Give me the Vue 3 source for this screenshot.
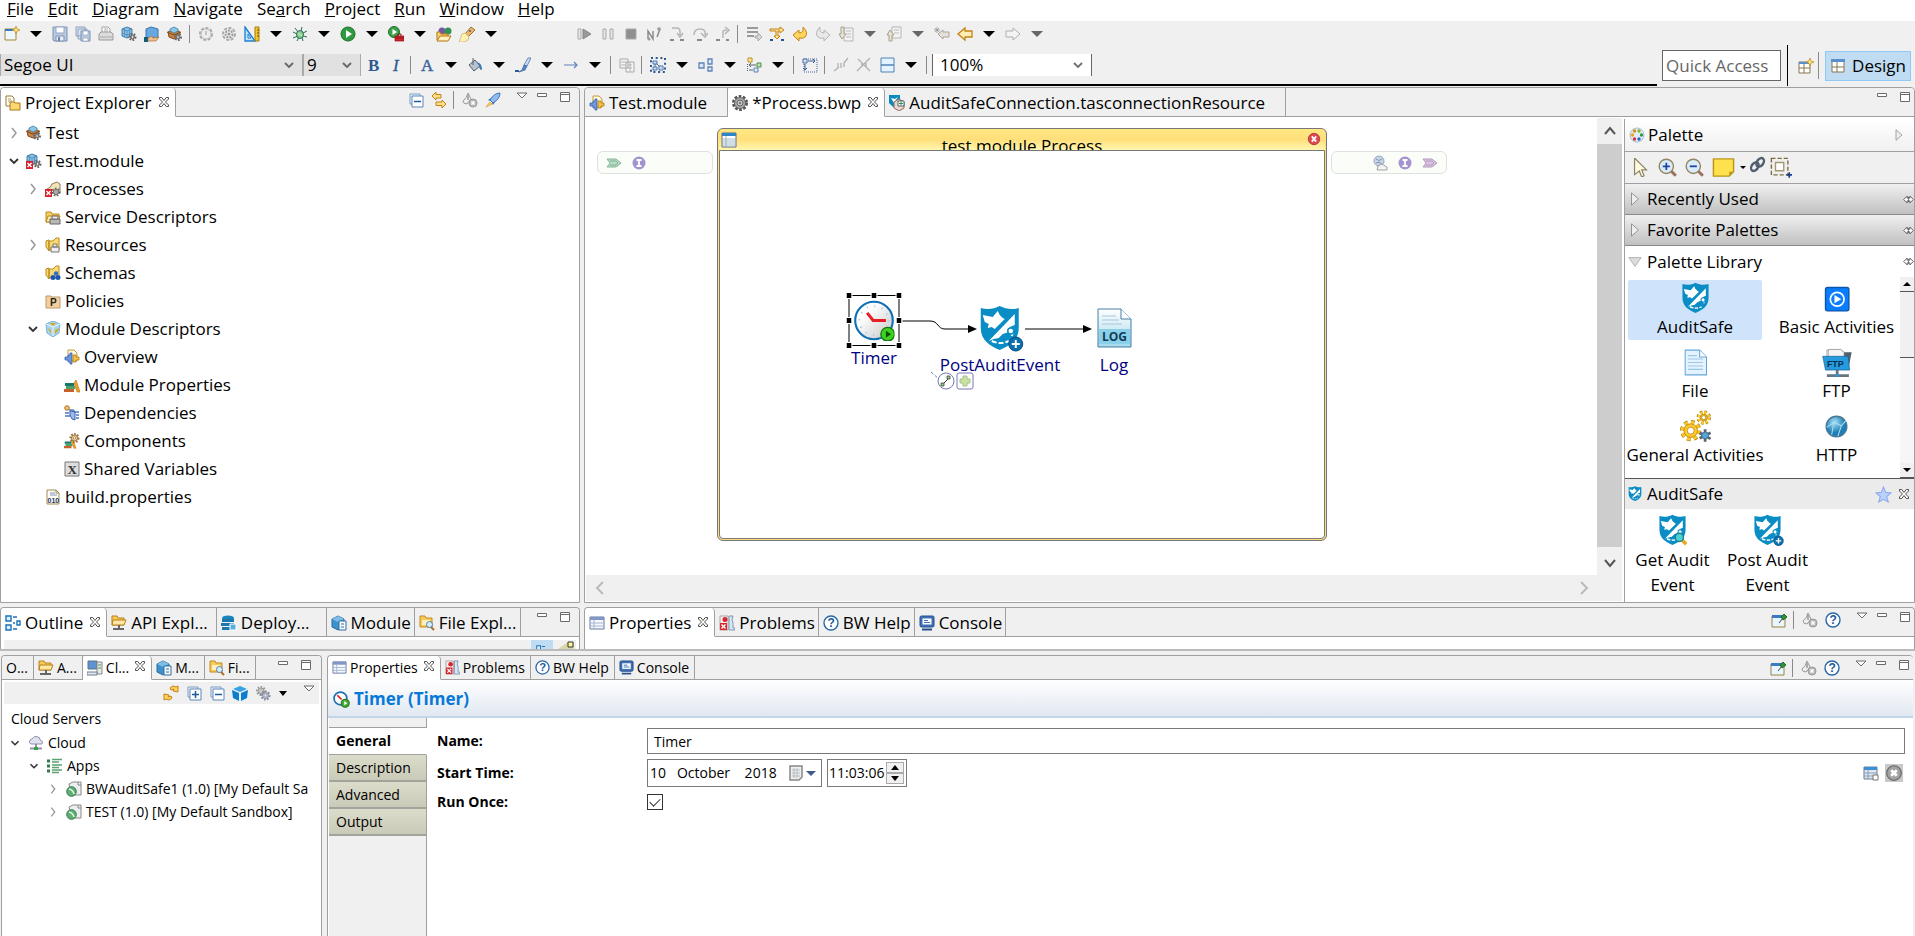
<script setup>
import { h, ref } from 'vue'

const gear = (x, y, r, fill, stroke) =>
    `<circle cx="${x}" cy="${y}" r="${r}" fill="none" stroke="${stroke}" stroke-width="2" stroke-dasharray="1.6 1.4"/><circle cx="${x}" cy="${y}" r="${r - 1}" fill="${fill}" stroke="${stroke}"/><circle cx="${x}" cy="${y}" r="1.2" fill="#fff" stroke="${stroke}" stroke-width=".7"/>`
const cube = '<path d="M1 3l5-2 5 2v7l-5 2-5-2z" fill="#8cc0e6" stroke="#3f7fae"/><path d="M1 3l5 2 5-2M6 5v7M3.500 2v9M8.500 2v9M1 7l5 2 5-2" fill="none" stroke="#4c8ab8" stroke-width=".8"/>'
const errorBadge = '<path d="M0 8h7v8H0z" fill="#d8202c"/><path d="M1.500 10l4 4m0-4l-4 4" stroke="#fff" stroke-width="1.400"/>'
const folder = '<path d="M1 13V3h5l1 2h7v8z" fill="#f6cf62" stroke="#b98a1d"/><path d="M3 7h12l-2 6H1z" fill="#fde9a6" stroke="#b98a1d"/>'
const stack = '<path d="M1 6h9v3H1z" fill="#17766e"/><path d="M2 9h9v3H2z" fill="#4aa36b"/><path d="M0 12h10v3H0z" fill="#c7602a"/><path d="M12 3l4 12h-3l-3-9z" fill="#f0a020" stroke="#b96d0b" stroke-width=".6"/>'
const shield = '<path d="M5 3c7 2 13 1 19-2 6 3 12 4 19 2v20c0 12-9 18-19 22C14 41 5 35 5 23z" fill="#0a8dc5"/><path d="M7 10l10 2 5-6 2 4 3 3 2 1-10 10-3-2-4 1 1-4-4-2z" fill="#fff"/><path d="M39 9L13 36l5-2 5-1 4-4 6-2 1-5 5-2z" fill="#fff"/><path d="M16 36q9 4 17 0m3-5l2-7" fill="none" stroke="#fff" stroke-width="2" stroke-dasharray="5 2"/><circle cx="35" cy="26" r="3" fill="#fff" stroke="#0a8dc5" stroke-width="1.500"/>'
const doc = '<path d="M2 1h9l3 3v11H2z" fill="#fffdf5" stroke="#a18b55"/><path d="M11 1v3h3" fill="none" stroke="#a18b55"/>'
const puzzle = '<path d="M4 1h6l3 3v8H4z" fill="#fff8df" stroke="#c29a3a"/><path d="M1 8h3V6h2V4h2v11H6v-2H4v-2H1z" fill="#6d96dc" stroke="#3a62ad" stroke-width=".8"/><path d="M9 6h3v2h3v3h-3v2H9z" fill="#f3c048" stroke="#b27b12" stroke-width=".8"/>'
const windowIcon = '<path d="M1 2h14v12H1z" fill="#f4f8fd" stroke="#66789e"/><path d="M1 2h14v3H1z" fill="#8197c5"/><path d="M5 5v9M1 8h14M1 11h14" stroke="#a9b4cf"/>'

const icons = {
    new: '<path d="M1 3h11v11H1z" fill="#eef7ff" stroke="#a88735"/><path d="M1 3h9v2H1z" fill="#3f78bd"/><path d="M12 0l1.200 3L16 4l-2.800 1L12 8l-1.200-3L8 4l2.800-1z" fill="#ffe27a" stroke="#b88a1e" stroke-width=".7"/>',
    save: '<path d="M1 1h14v14H2l-1-1z" fill="#b9c9df" stroke="#7d92b3"/><path d="M4 1h8v6H4z" fill="#fff" stroke="#93a6c4"/><path d="M4 10h8v5H4z" fill="#e9eef6" stroke="#7d92b3"/><path d="M6 11h2v4H6z" fill="#6c82a6"/>',
    saveAll: '<path d="M1 1h9v9H1zM3 3h9v10H3z" fill="#dbe4f0" stroke="#8ea1be"/><path d="M6 5h9v10H6z" fill="#b9c9df" stroke="#7d92b3"/><path d="M8 5h5v4H8zM8 12h5v3H8z" fill="#fff" stroke="#93a6c4" stroke-width=".7"/>',
    print: '<path d="M4 7V1h6l2 2v4" fill="#fff" stroke="#a2a2a2"/><path d="M1 8l2-2h10l2 2v6H1z" fill="#dcdcdc" stroke="#999"/><path d="M2 11h12M6 3h4M6 5h4" stroke="#aaa"/>',
    module: cube + gear(11.5, 11, 3, '#bbb', '#666'),
    deploy: '<path d="M2 3l5-2 7 2v9H2z" fill="#66a8df" stroke="#3b77ab"/><path d="M0 11h4v5H0z" fill="#0b5c7d"/><path d="M4 12l4-2 1 2 6-1-3 4H4z" fill="#f1bf8e" stroke="#a96c3c" stroke-width=".7"/>',
    app: '<path d="M1 6l6-3 6 3-1 5-5 2-5-2z" fill="#c98341" stroke="#7c4a1c"/><path d="M3 3l4-2 4 2v2L7 7 3 5z" fill="#8cc9e8" stroke="#3e7e9f" stroke-width=".8"/><path d="M0 6l7 3 7-3" fill="none" stroke="#7c4a1c"/>' + gear(11, 11, 3, '#bbb', '#666'),
    gearOff: '<circle cx="8" cy="8" r="6" fill="none" stroke="#aaa" stroke-width="2" stroke-dasharray="3 1.500"/><circle cx="8" cy="8" r="5" fill="#eee" stroke="#bbb"/><path d="M8 5v4" stroke="#999"/>',
    gearsOff: '<circle cx="8" cy="8" r="6" fill="none" stroke="#aaa" stroke-width="2" stroke-dasharray="3 1.500"/><circle cx="8" cy="8" r="3.500" fill="#eee" stroke="#999" stroke-width="2" stroke-dasharray="2 1"/><circle cx="8" cy="8" r="1.500" fill="#999"/>',
    ruler: '<path d="M1 1l10 14H1z" fill="#bfe4ff" stroke="#1b7fd2" stroke-width="1.300"/><path d="M4 8l3 4H4z" fill="#fff" stroke="#1b7fd2"/><path d="M11 1h4v14h-4z" fill="#f6c52a" stroke="#a47c07"/><path d="M13 4h2m-2 3h2m-2 3h2" stroke="#6b5000"/>',
    bug: '<path d="M3 2l3 4M10 1L9 5M15 5l-4 2M1 6l4 2M1 12l5-2M5 15l2-4M15 11l-4-1M11 15l-1-4" stroke="#2c6b5a" fill="none"/><ellipse cx="8" cy="8.500" rx="3.500" ry="4" fill="#8ccf8a" stroke="#216b5e"/><path d="M6 7l4 3" stroke="#d8f5d0"/>',
    run: '<circle cx="8" cy="8" r="7" fill="#2f9a40" stroke="#1b6d2a"/><path d="M6 4l6 4-6 4z" fill="#fff"/>',
    runExternal: '<circle cx="6" cy="6" r="5.500" fill="#3ea04c" stroke="#1b6d2a"/><path d="M4.500 3l4.500 3-4.500 3z" fill="#fff"/><path d="M7 10h9v5H7z" fill="#d3232b" stroke="#8e1218" stroke-width=".7"/><path d="M10 10V8h3v2M7 12h9" fill="none" stroke="#8e1218"/>',
    openType: '<circle cx="6" cy="5" r="3.500" fill="#7658a8"/><circle cx="12" cy="5" r="3.500" fill="#2f9450"/><path d="M1 14V6h3l1 2h7v2" fill="#f7d073" stroke="#b27715"/><path d="M1 15l3-5h11l-3 5z" fill="#fff0bd" stroke="#b27715"/>',
    flashlight: '<path d="M6 8l6-7 4 3-7 7z" fill="#efb765" stroke="#9c6e34"/><path d="M3 8l3-1 4 4-1 3-4 2H0z" fill="#fff2b5" stroke="#c9a869" stroke-width=".7"/><circle cx="11" cy="5" r="1" fill="#465f93"/>',
    resume: '<path d="M1 3h3v10H1z" fill="#e5e5e5" stroke="#aaa"/><path d="M6 3l8 5-8 5z" fill="#999" stroke="#888"/>',
    pause: '<path d="M3 3h3v10H3zM10 3h3v10h-3z" fill="#e5e5e5" stroke="#aaa"/>',
    stop: '<path d="M3 3h10v10H3z" fill="#8f8f8f" stroke="#aaa"/>',
    disconnect: '<path d="M2 13V5l5 8V5m7-2l-3 8" fill="none" stroke="#8c8c8c" stroke-width="1.500"/><circle cx="13" cy="3" r="1.800" fill="#999"/><circle cx="3" cy="13" r="1.500" fill="#999"/>',
    stepInto: '<path d="M3 2h5q3 0 3 4v3m-3-2l3 4 3-4" fill="none" stroke="#b5b5b5" stroke-width="1.500"/><path d="M1 14h4m6 0h4" stroke="#888" stroke-width="2"/>',
    stepOver: '<path d="M2 9q0-6 6-6t5 6m-4-2l4 4 3-4" fill="none" stroke="#b5b5b5" stroke-width="1.500"/><path d="M5 14h5" stroke="#888" stroke-width="2"/>',
    stepReturn: '<path d="M8 12V6q0-2 4-2m-2-3l4 3-4 4" fill="none" stroke="#b5b5b5" stroke-width="1.500"/><path d="M1 14h4m6 0h3" stroke="#888" stroke-width="2"/>',
    dropFrame: '<path d="M1 2h11M1 6h11M1 10h7" stroke="#999" stroke-width="2"/><path d="M9 10h3V7l4 4-4 4v-3H9z" fill="#ddd" stroke="#999" stroke-width=".8"/>',
    stepFilter: '<path d="M1 3h10V1l4 3-4 3V5H9v5h2l-3 3-3-3h2V5H1z" fill="#ffe6a0" stroke="#c58212"/><path d="M1 14h3m8 0h3" stroke="#24548f" stroke-width="2"/>',
    undo: '<path d="M1 9l6-5v3q5 0 4-6 6 6 2 10-2 2-6 1v3z" fill="#ffd560" stroke="#c58212"/>',
    redo: '<path d="M15 9L9 4v3Q4 7 5 1q-6 6-2 10 2 2 6 1v3z" fill="#e8e8e8" stroke="#b5b5b5"/>',
    next: '<path d="M6 2h9v13H6z" fill="#f3f3f3" stroke="#b5b5b5"/><path d="M8 5h5M8 8h5M8 11h5" stroke="#bbb"/><path d="M3 1h3v7h2l-4 5-3-5h2z" fill="#e6e3d8" stroke="#aaa08a"/>',
    previous: '<path d="M6 1h9v11H6z" fill="#f3f3f3" stroke="#b5b5b5"/><path d="M8 4h5M8 7h5" stroke="#bbb"/><path d="M3 15h3V9h2L4 4 1 9h2z" fill="#e6e3d8" stroke="#aaa08a"/>',
    lastEdit: '<path d="M4 8l5-4v2h6v5H9v2z" fill="#e4e1d8" stroke="#aaa59a"/><path d="M1 2l4 4m0-4L1 6m2-5v6M0 4h6" stroke="#999" stroke-width=".8"/>',
    back: '<path d="M1 8l7-6v3h7v6H8v3z" fill="#ffedb5" stroke="#c58212" stroke-width="1.300"/>',
    forward: '<path d="M15 8L8 2v3H1v6h7v3z" fill="#f4f4f4" stroke="#b0b0b0"/>',
    bold: '<text x="3" y="14" font-family="Liberation Serif" font-weight="bold" font-size="17" fill="#2f5a93">B</text>',
    italic: '<text x="5" y="14" font-family="Liberation Serif" font-style="italic" font-size="17" fill="#2f5a93" stroke="#2f5a93" stroke-width=".3">I</text>',
    fontColor: '<text x="2" y="14" font-family="Liberation Serif" font-size="17" fill="#3f67a0" stroke="#3f67a0" stroke-width=".5">A</text>',
    fill: '<path d="M2 8l6-5 5 6-6 5z" fill="#b9c3cd" stroke="#57606a"/><path d="M6 1v7" stroke="#57606a"/><path d="M10 5q5 1 5 8-3 0-3-5z" fill="#3a76b8"/>',
    brush: '<path d="M13 1h3l-4 8-3-1z" fill="#cfe0f5" stroke="#456ea5" stroke-width=".8"/><path d="M9 8l3 1-2 4-6 2 3-2z" fill="#4f83c6" stroke="#456ea5" stroke-width=".8"/><path d="M0 14h4" stroke="#2f5a93" stroke-width="2"/>',
    line: '<path d="M1 8h13m-3-3l3 3-3 3" fill="none" stroke="#5f81bd" stroke-width="1.200"/>',
    copyStyle: '<path d="M1 2h8v9H1zM7 5h8v10H7z" fill="#f4f4f4" stroke="#a9a9a9"/><path d="M2 5h5M2 8h5M9 8h4M9 11h4M11 5v10" stroke="#b5b5b5"/>',
    selectAll: '<path d="M1 1h14v14H1z" fill="none" stroke="#2d5890" stroke-dasharray="2 2.700" stroke-width="2"/><path d="M5 5l6 6M5 5v7" stroke="#43658f"/><path d="M3 4h4v3H3zM3 10h4v3H3zM9 9h4v4H9z" fill="#cfe0f5" stroke="#4b74a8"/>',
    arrange: '<path d="M1 6h5v5H1zM10 2h4v5h-4zM10 10h4v4h-4z" fill="#dbe8f8" stroke="#5f83b6" stroke-width="1.300"/>',
    align: '<path d="M2 1h4v4H2z" fill="#ffe9a5" stroke="#bb8c1f"/><path d="M11 6h4v4h-4z" fill="#bfe2b7" stroke="#4a8d45"/><path d="M8 11h4v4H8z" fill="#dbe8f8" stroke="#5f83b6"/><path d="M1.500 7v8" stroke="#567" stroke-dasharray="1 1"/><path d="M3 8h7m-7 0l2-2m-2 2l2 2M3 13h4" fill="none" stroke="#567"/>',
    autosize: '<path d="M2 2h13v13H2z" fill="none" stroke="#4568a0" stroke-dasharray="1 1"/><path d="M1 2h4v4H1z" fill="#d6e5f6" stroke="#4568a0"/><path d="M6 4h7m-2-2l2 2-2 2M3 7v6m-2-2l2 2 2-2" fill="none" stroke="#365f99"/>',
    hideA: '<path d="M1 14l5-4m5-4l4-5M5 6v5m3-5v5m3-5v4" fill="none" stroke="#b0b0b0" stroke-width="1.300"/>',
    hideB: '<path d="M1 14L14 1M2 2l12 12M6 6v4m4-4v4" fill="none" stroke="#b0b0b0" stroke-width="1.300"/>',
    split: '<path d="M2 1h13v14H2z" fill="#e4f3ff" stroke="#5383b4"/><path d="M2 8h13" stroke="#5383b4" stroke-width="1.500"/>',
    perspectiveNew: '<path d="M1 4h11v11H1z" fill="#fff" stroke="#857650"/><path d="M1 4h10v2H1z" fill="#5c8fd0"/><path d="M6 6v9M1 10h11" stroke="#857650"/><path d="M12 0l1.200 3L16 4l-2.800 1L12 8l-1.200-3L8 4l2.800-1z" fill="#ffe27a" stroke="#b88a1e" stroke-width=".7"/>',
    perspective: '<path d="M2 2h12v12H2z" fill="#fff" stroke="#857650"/><path d="M1 1h14v3H1z" fill="#5c8fd0"/><path d="M7 4v10M2 9h12" stroke="#857650"/>',
    explorer: '<path d="M1 1h6l2 2v8H1z" fill="#fff" stroke="#9a7b2d"/><path d="M3 4h3M3 6h4" stroke="#b99b5a"/><path d="M5 15V7h4l1 1h5v7z" fill="#fbd671" stroke="#a97b18"/>',
    close: '<path d="M2 2h3l3 4 3-4h3v2l-4 4 4 4v2h-3L8 10l-3 4H2v-2l4-4-4-4z" fill="#fff" stroke="#4a4a4a" stroke-width="1.300"/>',
    collapse: '<path d="M2 2h10v10H2z" fill="#e7f1fb" stroke="#7f9fc4"/><path d="M4 4h11v11H4z" fill="#fff" stroke="#5d86b8"/><path d="M6 9.500h7" stroke="#1b5c9a" stroke-width="1.500"/>',
    expand: '<path d="M2 2h10v10H2z" fill="#e7f1fb" stroke="#7f9fc4"/><path d="M4 4h11v11H4z" fill="#fff" stroke="#5d86b8"/><path d="M6 9.500h7M9.500 6v7" stroke="#1b5c9a" stroke-width="1.500"/>',
    link: '<path d="M5 0L1 4l4 4V6h5V2.500H5zM11 8l4 4-4 4v-2.500H5V10h6z" fill="#ffe08a" stroke="#c58212"/>',
    validate: '<path d="M6 1q-1 5-5 8 0 3 4 3l4-5z" fill="#eee" stroke="#999"/><path d="M6 3v5" stroke="#999" stroke-width="1.500"/><circle cx="11" cy="11" r="4" fill="#bbb" stroke="#999"/><path d="M9.500 9.500l3 3m0-3l-3 3" stroke="#fff" stroke-width="1.500"/>',
    rocket: '<path d="M15 1q-6 0-10 7l3 3q7-4 7-10z" fill="#8fbcf0" stroke="#4675b5"/><path d="M6 6L3 8l2 1zM10 10l-2 3-1-2z" fill="#3f72b8"/><path d="M5 10l-4 5 6-3z" fill="#ffd35c" stroke="#d58a1c" stroke-width=".6"/>',
    viewMenu: '<path d="M3 4h10l-5 5z" fill="#fff" stroke="#6b6b6b"/>',
    minimize: '<path d="M3.500 4.500h9v3h-9z" fill="#fff" stroke="#6b6b6b"/>',
    maximize: '<path d="M3.500 3.500h9v9h-9zM3.500 5.500h9" fill="#fff" stroke="#6b6b6b"/>',
    right: '<path d="M6 3l4 5-4 5" fill="none" stroke="#999" stroke-width="1.500"/>',
    down: '<path d="M4 6l4 4 4-4" fill="none" stroke="#333" stroke-width="1.800"/>',
    moduleError: cube + gear(11.5, 11, 3, '#bbb', '#666') + errorBadge,
    processes: '<path d="M2 8q4-1 5-5l5-2 3 2v9H2z" fill="#f3e3b7" stroke="#8a7a55"/>' + gear(11, 11, 3.5, '#ccc', '#666') + errorBadge,
    service: folder + '<path d="M5 10h10v5H5z" fill="#b9b9b9" stroke="#666"/><path d="M7 7h6v3H7z" fill="#eee" stroke="#666"/>',
    resources: '<path d="M1 4l3-1v11l-3-4zM4 4h4l3-3h3v12H4z" fill="#fbd872" stroke="#b98a1d"/><path d="M6 10h8v5H6zM8 7h4v3H8z" fill="#eee" stroke="#777"/>',
    schemas: '<path d="M1 4l3-1v11l-3-4zM4 4h4l3-3h3v12H4z" fill="#fbd872" stroke="#b98a1d"/><circle cx="11" cy="8.500" r="2.200" fill="#2f6ecc"/><circle cx="8" cy="12.500" r="2.500" fill="#1c56b5"/><circle cx="13" cy="12.500" r="2.500" fill="#1c56b5"/>',
    policies: '<path d="M1 3h5l1 1h8v11H1z" fill="#f3cf9d" stroke="#bd9a6c"/><text x="5" y="13" font-family="Liberation Sans" font-weight="bold" font-size="10" fill="#222">P</text>',
    descriptors: '<path d="M1 3l7-3 7 3-1 9-6 4-6-4z" fill="#a9d5ef" stroke="#7ab0d4"/><path d="M1 3l7 3 7-3M8 6v9" fill="none" stroke="#e6f5fd"/><path d="M5 2h6L8 5zM3 7l3 2v4zM10 13V9l4-2-1 3z" fill="#d9a91c"/>',
    overview: puzzle,
    properties: stack,
    dependencies: '<circle cx="3" cy="3" r="2.300" fill="#f3bd76" stroke="#b0762a"/><path d="M1 8h4M1 11h5M5 5h4l2 2h4M12 10h3M12 13h3" stroke="#4d78be" stroke-width="1.500" fill="none"/><path d="M6 6l5 1v8l-3-1-2-4z" fill="#9cb9ec" stroke="#3a62ad"/>',
    components: '<g transform="translate(0 4) scale(.75)">' + stack + '</g>' + gear(10.5, 5, 4, '#f1d9a0', '#9a6f3a'),
    variables: '<path d="M1 1h14v14H1z" fill="#ddd" stroke="#777"/><text x="3.500" y="13" font-family="Liberation Serif" font-weight="bold" font-size="13" fill="#333">X</text>',
    build: doc + '<path d="M5 4h5M5 6h7" stroke="#7c93b8"/><text x="2.500" y="14" font-family="Liberation Sans" font-weight="bold" font-size="7" fill="#1d3766">010</text>',
    gear: '<circle cx="8" cy="8" r="6.500" fill="none" stroke="#555" stroke-width="3" stroke-dasharray="2.600 1.480"/><circle cx="8" cy="8" r="5.500" fill="#aaa" stroke="#666"/><circle cx="8" cy="8" r="3" fill="#ccc" stroke="#666"/><circle cx="8" cy="8" r="1.200" fill="#777"/>',
    connection: '<path d="M0 0h11v11q-4 3-8 0L0 8z" fill="#0b8bbd"/><path d="M2 3l4 1 3-2-4 6z" fill="#fff"/><path d="M5 7l5-3 5 3v6l-5 3-5-3z" fill="#ead6cc" stroke="#8a6d60"/><path d="M9 6h6v5H9z" fill="#fff" stroke="#345" stroke-width=".8"/><path d="M10 8.500h4m-2-2v4" stroke="#1a9a44"/>',
    table: '<path d="M1 1h14v14H1z" fill="#fff" stroke="#5d6f83"/><path d="M1 1h14v3H1z" fill="#2e86c8"/><path d="M5 4v11M1 7h14M1 9h14M1 11h14M1 13h14" stroke="#8ea8bd" stroke-width=".8"/>',
    failed: '<circle cx="8" cy="8" r="6.500" fill="#dc4a50" stroke="#b2353c"/><path d="M5.500 5l5 6m0-6l-5 6" stroke="#fff" stroke-width="2"/>',
    inputPort: '<path d="M1 4h9l5 4-5 4H1l3-4z" fill="#b7ddc5" stroke="#87b597"/><path d="M4 6h6l2 2-2 2H4" fill="none" stroke="#73a786" stroke-width=".8"/>',
    outputPort: '<path d="M1 4h9l5 4-5 4H1l3-4z" fill="#d9c5e0" stroke="#b49bbd"/><path d="M4 6h6l2 2-2 2H4" fill="none" stroke="#ac90b7" stroke-width=".8"/>',
    interface: '<circle cx="8" cy="8" r="6.500" fill="#a394cf"/><path d="M5.500 5h5M8 5v6M5.500 11h5" stroke="#fff" stroke-width="1.800"/>',
    fault: '<circle cx="7" cy="6" r="5" fill="#c9d5e6" stroke="#97a8c1"/><path d="M4 4q3 3 6 0M4 8q3-2 6 1" fill="none" stroke="#8095b6"/><path d="M5 15l1-4 4-2 5 3v3z" fill="#f2f2f2" stroke="#a3a3a3"/>',
    palette: '<circle cx="8" cy="8" r="7" fill="#e3ecf7" stroke="#a9bbd3"/><circle cx="5.500" cy="4" r="1.700" fill="#d7901c"/><circle cx="10" cy="4" r="1.700" fill="#7cb82a"/><circle cx="3.500" cy="8" r="1.700" fill="#e9a911"/><circle cx="12.500" cy="8" r="1.700" fill="#2b9c3d"/><circle cx="5.500" cy="12" r="1.700" fill="#d3303a"/><circle cx="10" cy="12" r="1.700" fill="#2e64c4"/>',
    cursor: '<path d="M3 0l10 10H9l2 5-2 1-2-5-4 3z" fill="#fffbe0" stroke="#8b8262"/>',
    zoomIn: '<path d="M11 11l4 4" stroke="#9c6f60" stroke-width="2.500"/><circle cx="7" cy="7" r="6" fill="#d9ecfb" stroke="#94865f" stroke-width="1.200"/><path d="M4 7h6M7 4v6" stroke="#23449b" stroke-width="1.500"/>',
    zoomOut: '<path d="M11 11l4 4" stroke="#9c6f60" stroke-width="2.500"/><circle cx="7" cy="7" r="6" fill="#d9ecfb" stroke="#94865f" stroke-width="1.200"/><path d="M4 7h6" stroke="#23449b" stroke-width="1.500"/>',
    note: '<path d="M1 2h14v9l-3 3H1z" fill="#ffe04d" stroke="#b99618"/><path d="M15 11h-3v3z" fill="#b99618"/>',
    attach: '<ellipse cx="5.500" cy="10" rx="3" ry="4.500" transform="rotate(35 5.500 10)" fill="none" stroke="#51606f" stroke-width="2.300"/><ellipse cx="10.500" cy="6" rx="3" ry="4.500" transform="rotate(35 10.500 6)" fill="none" stroke="#51606f" stroke-width="2.300"/>',
    marquee: '<path d="M1 1h12v12H1z" fill="none" stroke="#7b6b3d" stroke-dasharray="3 1.500"/><path d="M4 4h6v6H4z" fill="#fff" stroke="#a59771"/><path d="M12 13h4m-2-2v4" stroke="#1b3e8a" stroke-width="1.200"/>',
    collapsed: '<path d="M4 1l8 7-8 7z" fill="#eee" stroke="#888"/>',
    expanded: '<path d="M1 3h14l-7 10z" fill="#ddd" stroke="#aaa"/>',
    pin: '<path d="M6 3L1 8l5 5v-3h4v3l5-5-5-5v3H6z" fill="#fff" stroke="#555" stroke-width="1.300"/><path d="M8 4v8" stroke="#555"/>',
    star: '<path d="M8 1l2 5 5 .5-4 3.500 1.500 5L8 12.500 3.500 15 5 10 1 6.500 6 6z" fill="#b8d2ff" stroke="#8ba9ea"/>',
    outline: '<path d="M1 1h5v5H1zM1 10h5v5H1z" fill="#dff0ff" stroke="#1a72b8" stroke-width="1.400"/><path d="M8 2h4M8 8h2M12 6h3v4h-3zM8 14h4" fill="none" stroke="#1a72b8" stroke-width="1.400"/>',
    api: '<path d="M1 10V1h5l1 2h6v7z" fill="#f8cb59" stroke="#b5801e"/><path d="M2 5h13l-2 5H1z" fill="#ffe7a3" stroke="#b5801e"/><path d="M8 10v4M2 14h11" stroke="#666" stroke-width="2"/>',
    server: '<ellipse cx="7" cy="3" rx="6" ry="2.500" fill="#1b83bc"/><path d="M1 4h12v3H1zM0 8h13v3H0zM1 12h12v3H1z" fill="#1b78ae"/><path d="M9 9h6v6H9z" fill="#5ab0dd" stroke="#fff"/>',
    moduleTab: '<path d="M1 4l6-3 6 3v8l-6 3-6-3z" fill="#3d92ce" stroke="#27709f"/><path d="M1 4l6 3 6-3-6-3z" fill="#7dbde8"/><path d="M8 6h7v9H8z" fill="#f5faff" stroke="#346c9c"/><path d="M10 9h3M10 12h3" stroke="#346c9c"/>',
    fileExplorer: '<path d="M1 12V1h5l1 2h6v9z" fill="#f8cb59" stroke="#c18922"/><path d="M3 5h8v5H3z" fill="#fff0c4"/><path d="M12 12l3 3" stroke="#b36d26" stroke-width="2"/><circle cx="10.500" cy="9.500" r="3" fill="#d4edff" stroke="#5580aa"/>',
    computer: '<path d="M1 1h9v8H1z" fill="#5f92d0" stroke="#5c738d"/><path d="M10 2h5v12h-5z" fill="#e8e8e8" stroke="#888"/><path d="M0 12h10v3H0z" fill="#e5e9ef" stroke="#6c7e92"/><path d="M11 5h3M11 8h3" stroke="#3f9a4b"/>',
    window: windowIcon,
    problems: '<path d="M1 1h8v14H1z" fill="#f8eeee" stroke="#b3a2a2"/><path d="M10 1h4q-2 3 0 7v5h2v2h-6z" fill="#d9e6f4" stroke="#7f97b4"/><circle cx="6" cy="4.500" r="2.500" fill="#d7262d"/><path d="M1 8h7v7H1z" fill="#d7262d"/><path d="M2.500 9.500l4 4m0-4l-4 4" stroke="#fff" stroke-width="1.400"/>',
    help: '<circle cx="8" cy="8" r="7" fill="#fff" stroke="#2767a7" stroke-width="1.400"/><text x="4.500" y="12" font-family="Liberation Sans" font-weight="bold" font-size="12" fill="#1b5a9c">?</text>',
    console: '<rect x="1" y="1" width="14" height="11" rx="1.500" fill="#3f6fb4" stroke="#274f8e"/><path d="M3.500 3.500h9v6h-9z" fill="#fff"/><path d="M5 5.500h4M5 7.500h6" stroke="#3f6fb4"/><path d="M3 14.500h10" stroke="#274f8e" stroke-width="1.800"/>',
    pinWindow: '<path d="M1 4h13v11H1z" fill="#e8f6ff" stroke="#9c8243"/><path d="M1 3h10v3H1z" fill="#3b7ac4"/><path d="M8 11l4-5" stroke="#444"/><path d="M10 5l3-3 3 3-4 3z" fill="#2c9437" stroke="#1d6b27"/>',
    sync: '<path d="M7 3l3-2 3 1 2-1v6l-5-1 1-2-3 1zM9 13l-3 2-3-1-2 1V9l5 1-1 2 3-1z" fill="#ffd25f" stroke="#c58212"/>',
    blueCube: '<path d="M8 1l7 3-7 3-7-3z" fill="#38a2e6"/><path d="M0 5l7 3v8l-6-3zM16 5L9 8v8l6-3z" fill="#0a7fd0"/>',
    gears: gear(6, 6, 4, '#ccc', '#999') + gear(10.5, 10.5, 4, '#bcd', '#889'),
    cloud: '<path d="M3 9q-3-1-1-4 1-1 2-1 2-4 6-2 2 0 2 3 4 1 2 4z" fill="#dfe2ef" stroke="#8e91ad"/><path d="M8 9v4M2 13.500h12" stroke="#8e91ad" stroke-width="2"/><path d="M6 12h4v3H6z" fill="#35a045"/>',
    list: '<path d="M0 3h3M0 8h3M0 13h3" stroke="#2f7a48" stroke-width="3"/><path d="M5 1.500h10M5 4h7M5 7h10M5 9.500h7M5 12h10M5 14.500h7" stroke="#5aa36f" stroke-width="1.500"/>',
    appRunning: '<path d="M3 3l4-2h8v13H6z" fill="#eee" stroke="#888"/><path d="M12 1v3h3" fill="none" stroke="#888"/><circle cx="5.500" cy="10.500" r="4.800" fill="#5fae72" stroke="#367b50"/><path d="M3 8q4 1 5 5" stroke="#e5f8e8" stroke-width="1.500" fill="none"/>',
    timer: '<circle cx="7" cy="7" r="6" fill="#fff" stroke="#1d73b4" stroke-width="1.600"/><path d="M4 4l4 4" stroke="#d8202c" stroke-width="1.600"/><circle cx="11.500" cy="11.500" r="3.800" fill="#45ad35" stroke="#236e1b"/><path d="M10.500 9.500l3 2-3 2z" fill="#fff"/>',
    calendar: '<path d="M2 1h12v11l-3 3H2z" fill="#eee" stroke="#888" stroke-width="1.500"/><path d="M4 5h8M4 8h8M4 11h8M6 3v10M9 3v10" stroke="#b5bcc6"/>',
    tableOff: '<path d="M1 2h13v12H1z" fill="#dfe8f2" stroke="#687b90"/><path d="M1 2h13v3H1z" fill="#3d8ed2"/><path d="M5 5v9M1 8h13M1 11h13" stroke="#8aa0b8"/><path d="M10 10h5v5h-5z" fill="#fff" stroke="#777"/>',
    clear: '<path d="M0 0h16v16H0z" fill="#c8c8c8"/><circle cx="8" cy="8" r="6.500" fill="#a2a2a2" stroke="#666"/><path d="M5.500 5.500l5 5m0-5l-5 5" stroke="#fff" stroke-width="2.500"/>'
}

const plusBadge = '<circle cx="40" cy="39" r="7" fill="#0c6fae" stroke="#084f80"/><path d="M36 39h8M40 35v8" stroke="#fff" stroke-width="2"/>'
const cog = (x, y, r, fill, stroke) =>
    `<circle cx="${x}" cy="${y}" r="${r}" fill="none" stroke="${stroke}" stroke-width="7" stroke-dasharray="${r * 0.42} ${r * 0.365}"/><circle cx="${x}" cy="${y}" r="${r}" fill="none" stroke="${fill}" stroke-width="5" stroke-dasharray="${r * 0.42} ${r * 0.365}"/><circle cx="${x}" cy="${y}" r="${r - 2}" fill="${fill}" stroke="${stroke}"/><circle cx="${x}" cy="${y}" r="${r / 2.4}" fill="#fff" stroke="${stroke}"/>`
const largeIcons = {
    shield,
    post: shield + plusBadge,
    get: shield + '<path d="M37 37l7 7" stroke="#eaa72a" stroke-width="5"/><circle cx="34" cy="34" r="6" fill="#4dd0d4" stroke="#1d7f92" stroke-width="2"/>',
    clock: '<defs><linearGradient id="face" x1="0" y1="0" x2="1" y2="1"><stop offset=".3" stop-color="#fff"/><stop offset="1" stop-color="#c5c5c5"/></linearGradient></defs><circle cx="24" cy="24" r="22" fill="url(#face)" stroke="#0f70b4" stroke-width="2.500"/><circle cx="24" cy="24" r="17" fill="none" stroke="#a2c5df" stroke-width="3" stroke-dasharray="1 7.900"/><path d="M16 15l7 9h15" fill="none" stroke="#e91e25" stroke-width="3.500"/><circle cx="40" cy="40" r="8" fill="#3fd021" stroke="#14730c" stroke-width="1.500"/><path d="M38 36l6 4-6 4z" fill="#0c4b08"/>',
    log: '<defs><linearGradient id="sheet" x1="0" y1="0" x2="0" y2="1"><stop offset="0" stop-color="#fff"/><stop offset="1" stop-color="#a5d8ea"/></linearGradient></defs><path d="M8 4h23l10 10v28H8z" fill="url(#sheet)" stroke="#457fa9"/><path d="M31 4v10h10" fill="#fff" stroke="#457fa9"/><path d="M12 11h14M12 15h17M12 19h20" stroke="#a7c6dd"/><path d="M9 24h31v15H9z" fill="#8ad0e8"/><text x="12" y="36" font-family="Open Sans" font-weight="bold" font-size="12" fill="#123d59">LOG</text>',
    basic: '<rect x="8" y="8" width="34" height="34" rx="3" fill="#087dff" stroke="#0b56ab" stroke-width="2"/><circle cx="25" cy="25" r="10" fill="none" stroke="#fff" stroke-width="2.500"/><path d="M21 19l10 6-10 6z" fill="#fff"/>',
    file: '<path d="M9 6h21l10 10v26H9z" fill="#e4f3ff" stroke="#66a7d8" stroke-width="1.500"/><path d="M30 6v10h10" fill="#fff" stroke="#66a7d8" stroke-width="1.500"/><path d="M13 14h13M13 19h22M13 24h22M13 29h22M13 34h22" stroke="#9cc8e8" stroke-width="1.500"/>',
    ftp: '<path d="M10 6h21l6 5v14H10z" fill="#fff" stroke="#888"/><path d="M34 9h12l-5 26H12z" fill="#50606c"/><path d="M12 5h18l5 4v8H12z" fill="#f4f4f4" stroke="#888"/><path d="M4 15h37l2 20H8z" fill="#2799dd" stroke="#136398"/><path d="M25 35v8M10 43h32" stroke="#687580" stroke-width="4"/><circle cx="25" cy="43" r="2.500" fill="#2799dd"/><text x="10" y="30" font-family="Liberation Sans" font-weight="bold" font-size="13" fill="#063252">FTP</text>',
    general: cog(17, 30, 12, '#ffc727', '#a77a0f') + cog(36, 11, 7, '#ffc727', '#a77a0f') + '<path d="M38 28v18M30 33l16 9M30 41l16-8" stroke="#5b6773" stroke-width="4"/><circle cx="38" cy="37" r="5" fill="#51a6de" stroke="#46545f"/>',
    http: '<defs><radialGradient id="globe" cx=".4" cy=".3"><stop offset="0" stop-color="#a8def5"/><stop offset="1" stop-color="#1f7eb5"/></radialGradient></defs><circle cx="24" cy="24" r="15" fill="url(#globe)" stroke="#477995" stroke-width="2"/><path d="M10 25l11-7 10 5 7-8M20 18l-3 18M31 23l-5 15" fill="none" stroke="#a6e1f6" stroke-width="1.500"/>'
}

const Icon = ({ name, size = 16 }) =>
    h('svg', {
        width: size,
        height: size,
        viewBox: largeIcons[name] ? '0 0 48 48' : '0 0 16 16',
        class: 'icon',
        'aria-hidden': 'true',
        innerHTML: largeIcons[name] || icons[name]
    })
Icon.props = ['name', 'size']

const menus = ['_File', '_Edit', '_Diagram', '_Navigate', 'Se_arch', '_Project', '_Run', '_Window', '_Help'].map((text) => {
    const [before, rest] = text.split('_')
    return { before, key: rest[0], after: rest.slice(1) }
})

// '|' is a separator, 'v' a drop-down arrow and 'x' a disabled one
const mainTools = 'new v save saveAll print module deploy app | gearOff gearsOff ruler v bug v run v runExternal v openType flashlight v'.split(' ')
const debugTools = 'resume pause stop disconnect stepInto stepOver stepReturn | dropFrame stepFilter undo redo next x previous x lastEdit back v forward x'.split(' ')
const formatTools = 'bold italic | fontColor v fill v brush v line v | copyStyle | selectAll v arrange v align v | autosize | hideA hideB split v |'.split(' ')

const tree = [
    { label: 'Test', icon: 'app', level: 0, arrow: 'right' },
    { label: 'Test.module', icon: 'moduleError', level: 0, arrow: 'down' },
    { label: 'Processes', icon: 'processes', level: 1, arrow: 'right' },
    { label: 'Service Descriptors', icon: 'service', level: 1 },
    { label: 'Resources', icon: 'resources', level: 1, arrow: 'right' },
    { label: 'Schemas', icon: 'schemas', level: 1 },
    { label: 'Policies', icon: 'policies', level: 1 },
    { label: 'Module Descriptors', icon: 'descriptors', level: 1, arrow: 'down' },
    { label: 'Overview', icon: 'overview', level: 2 },
    { label: 'Module Properties', icon: 'properties', level: 2 },
    { label: 'Dependencies', icon: 'dependencies', level: 2 },
    { label: 'Components', icon: 'components', level: 2 },
    { label: 'Shared Variables', icon: 'variables', level: 2 },
    { label: 'build.properties', icon: 'build', level: 1 }
]

const cloudTree = [
    { label: 'Cloud', icon: 'cloud', level: 0, arrow: 'down' },
    { label: 'Apps', icon: 'list', level: 1, arrow: 'down' },
    { label: 'BWAuditSafe1 (1.0) [My Default Sa', icon: 'appRunning', level: 2, arrow: 'right' },
    { label: 'TEST (1.0) [My Default Sandbox]', icon: 'appRunning', level: 2, arrow: 'right' }
]

const editorTabs = [
    { label: 'Test.module', icon: 'overview' },
    { label: '*Process.bwp', icon: 'gear', active: true },
    { label: 'AuditSafeConnection.tasconnectionResource', icon: 'connection' }
]
const outlineTabs = [
    { label: 'Outline', icon: 'outline', active: true },
    { label: 'API Expl...', icon: 'api', room: 'medium' },
    { label: 'Deploy...', icon: 'server', room: 'wide' },
    { label: 'Module', icon: 'moduleTab' },
    { label: 'File Expl...', icon: 'fileExplorer' }
]
const cloudTabs = [
    { label: 'O...' },
    { label: 'A...', icon: 'api' },
    { label: 'Cl...', icon: 'computer', active: true },
    { label: 'M...', icon: 'moduleTab' },
    { label: 'Fi...', icon: 'fileExplorer' }
]
const propertyTabs = [
    { label: 'Properties', icon: 'window', active: true },
    { label: 'Problems', icon: 'problems' },
    { label: 'BW Help', icon: 'help' },
    { label: 'Console', icon: 'console' }
]
const viewTools = ['pinWindow', '|', 'validate', 'help']

const nodes = [
    { label: 'Timer', icon: 'clock', size: 41, x: 288, y: 177, selected: true },
    { label: 'PostAuditEvent', icon: 'post', size: 48, x: 414, y: 187 },
    { label: 'Log', icon: 'log', size: 48, x: 528, y: 187 }
]

const library = [
    { label: 'AuditSafe', icon: 'shield', selected: true },
    { label: 'Basic Activities', icon: 'basic' },
    { label: 'File', icon: 'file' },
    { label: 'FTP', icon: 'ftp' },
    { label: 'General Activities', icon: 'general' },
    { label: 'HTTP', icon: 'http' }
]

const sections = ['General', 'Description', 'Advanced', 'Output']
const section = ref('General')
const name = ref('Timer')
const time = ref('11:03:06')
const runOnce = ref(true)
</script>

<template>
    <div class="ide">
        <nav class="menubar">
            <button v-for="menu in menus" :key="menu.key + menu.after" type="button">{{ menu.before }}<u>{{ menu.key }}</u>{{ menu.after }}</button>
        </nav>

        <header class="toolbars">
            <div class="toolbar">
                <template v-for="(tool, i) in mainTools" :key="i">
                    <span v-if="tool === '|'" class="sep"></span>
                    <button v-else-if="tool === 'v'" type="button" class="caret" aria-label="More"></button>
                    <button v-else type="button" class="tool" :aria-label="tool"><Icon :name="tool" /></button>
                </template>
                <div class="toolbar toolbar--debug">
                    <template v-for="(tool, i) in debugTools" :key="i">
                        <span v-if="tool === '|'" class="sep"></span>
                        <button v-else-if="tool === 'v' || tool === 'x'" type="button" class="caret" :class="{ 'caret--off': tool === 'x' }" aria-label="More"></button>
                        <button v-else type="button" class="tool" :aria-label="tool"><Icon :name="tool" /></button>
                    </template>
                </div>
            </div>
            <div class="toolbar toolbar--format">
                <div class="combo combo--font">
                    <select aria-label="Font"><option>Segoe UI</option></select>
                    <Icon name="down" />
                </div>
                <div class="combo combo--size">
                    <select aria-label="Font size"><option>9</option></select>
                    <Icon name="down" />
                </div>
                <template v-for="(tool, i) in formatTools" :key="i">
                    <span v-if="tool === '|'" class="sep"></span>
                    <button v-else-if="tool === 'v'" type="button" class="caret" aria-label="More"></button>
                    <button v-else type="button" class="tool" :aria-label="tool"><Icon :name="tool" /></button>
                </template>
                <div class="combo combo--zoom">
                    <select aria-label="Zoom"><option>100%</option></select>
                    <Icon name="down" />
                </div>
            </div>
            <div class="perspectives">
                <input type="text" class="quick" placeholder="Quick Access" aria-label="Quick Access">
                <div class="perspectives__bar">
                    <button type="button" class="tool" aria-label="Open perspective"><Icon name="perspectiveNew" /></button>
                    <span class="sep sep--tall"></span>
                    <button type="button" class="design"><Icon name="perspective" />Design</button>
                </div>
            </div>
        </header>

        <main class="workspace">
            <section class="view explorer">
                <div class="tabs">
                    <button type="button" class="tab tab--active"><Icon name="explorer" />Project Explorer<Icon name="close" size="12" class="tab__close" /></button>
                    <div class="tabs__tools tabs__tools--inset">
                        <button type="button" class="tool" aria-label="Collapse all"><Icon name="collapse" /></button>
                        <button type="button" class="tool" aria-label="Link with editor"><Icon name="link" /></button>
                        <span class="sep"></span>
                        <button type="button" class="tool" aria-label="Validate"><Icon name="validate" /></button>
                        <button type="button" class="tool" aria-label="Launch"><Icon name="rocket" /></button>
                        <button type="button" class="win win--menu" aria-label="View menu"><Icon name="viewMenu" /></button>
                        <button type="button" class="win" aria-label="Minimize"><Icon name="minimize" /></button>
                        <button type="button" class="win win--max" aria-label="Maximize"><Icon name="maximize" /></button>
                    </div>
                </div>
                <ul class="tree">
                    <li v-for="item in tree" :key="item.label" :class="`tree__row tree__row--${item.level}`">
                        <span class="tree__arrow"><Icon v-if="item.arrow" :name="item.arrow" /></span>
                        <Icon :name="item.icon" />
                        {{ item.label }}
                    </li>
                </ul>
            </section>

            <section class="view editor">
                <div class="tabs">
                    <button v-for="tab in editorTabs" :key="tab.label" type="button" class="tab tab--editor" :class="{ 'tab--active': tab.active }">
                        <Icon :name="tab.icon" />{{ tab.label }}<Icon v-if="tab.active" name="close" size="12" class="tab__close" />
                    </button>
                    <div class="tabs__tools">
                        <button type="button" class="win" aria-label="Minimize"><Icon name="minimize" /></button>
                        <button type="button" class="win win--max" aria-label="Maximize"><Icon name="maximize" /></button>
                    </div>
                </div>
                <div class="editor__body">
                    <div class="scroller">
                        <div class="canvas">
                            <div class="port port--in"><Icon name="inputPort" /><Icon name="interface" /></div>
                            <div class="port port--out"><Icon name="fault" /><Icon name="interface" /><Icon name="outputPort" /></div>
                            <div class="process">
                                <div class="process__title">
                                    <Icon name="table" />
                                    <span>test.module.Process</span>
                                    <Icon name="failed" size="14" />
                                </div>
                                <div class="process__body"></div>
                            </div>
                            <svg class="links" width="620" height="300">
                                <path d="M317 203h28c9 0 7 8 15 8h25M440 211h60" fill="none" stroke="#000" />
                                <path d="M383 207l9 4-9 4zM498 207l9 4-9 4z" />
                                <path d="M346 254l8 7" stroke="#7777b8" stroke-dasharray="3 2" />
                                <circle cx="361" cy="263" r="8" fill="#fff" stroke="#7777b8" />
                                <path d="M358 266l6-6" stroke="#333" />
                                <path d="M356 265h3v3h-3zM362 258h3v3h-3z" fill="#8bd47e" stroke="#333" stroke-width=".7" />
                                <rect x="372" y="255" width="16" height="16" rx="2" fill="#fff" stroke="#7777b8" />
                                <path d="M378 258h4v3h3v4h-3v3h-4v-3h-3v-4h3z" fill="#cbe39e" stroke="#a3bf8f" />
                            </svg>
                            <div v-for="node in nodes" :key="node.label" class="node" :style="{ left: node.x + 'px', top: node.y + 'px' }">
                                <div :class="{ node__selection: node.selected }">
                                    <Icon :name="node.icon" :size="node.size" />
                                    <template v-if="node.selected">
                                        <i v-for="n in 8" :key="n" :class="`handle handle--${n}`"></i>
                                    </template>
                                </div>
                                <span>{{ node.label }}</span>
                            </div>
                        </div>
                        <div class="vbar">
                            <svg class="icon" width="25" height="26"><path d="M8 16l5-6 5 6" fill="none" stroke="#555" stroke-width="2" /></svg>
                            <div class="vbar__thumb"></div>
                            <svg class="icon" width="25" height="28"><path d="M8 13l5 6 5-6" fill="none" stroke="#555" stroke-width="2" /></svg>
                        </div>
                        <div class="hbar">
                            <svg class="icon" width="26" height="25"><path d="M17 7l-6 6 6 6" fill="none" stroke="#bbb" stroke-width="2" /></svg>
                            <svg class="icon" width="42" height="25"><path d="M6 7l6 6-6 6" fill="none" stroke="#bbb" stroke-width="2" /></svg>
                        </div>
                    </div>
                    <aside class="palette">
                        <div class="palette__title"><Icon name="palette" />Palette<Icon name="collapsed" size="12" class="push" /></div>
                        <div class="palette__tools">
                            <Icon name="cursor" size="19" />
                            <Icon name="zoomIn" size="19" />
                            <Icon name="zoomOut" size="19" />
                            <Icon name="note" size="23" />
                            <span class="mini"></span>
                            <Icon name="attach" size="17" class="up" />
                            <Icon name="marquee" size="22" />
                        </div>
                        <button type="button" class="drawer"><Icon name="collapsed" size="14" />Recently Used<Icon name="pin" size="11" class="push" /></button>
                        <button type="button" class="drawer"><Icon name="collapsed" size="14" />Favorite Palettes<Icon name="pin" size="11" class="push" /></button>
                        <button type="button" class="drawer drawer--open"><Icon name="expanded" size="14" />Palette Library<Icon name="pin" size="11" class="push" /></button>
                        <div class="library">
                            <div class="library__grid">
                                <button v-for="entry in library" :key="entry.label" type="button" class="entry" :class="{ 'entry--selected': entry.selected }">
                                    <Icon :name="entry.icon" size="33" />{{ entry.label }}
                                </button>
                            </div>
                            <div class="oldbar">
                                <span class="oldbar__up"></span>
                                <div class="oldbar__thumb"></div>
                                <span class="oldbar__down"></span>
                            </div>
                        </div>
                        <div class="group"><Icon name="shield" />AuditSafe<Icon name="star" size="17" class="push" /><Icon name="close" size="12" /></div>
                        <div class="group__items">
                            <button type="button" class="entry"><Icon name="get" size="33" />Get Audit<br>Event</button>
                            <button type="button" class="entry"><Icon name="post" size="33" />Post Audit<br>Event</button>
                        </div>
                    </aside>
                </div>
            </section>

            <section class="view strip">
                <div class="tabs">
                    <button v-for="tab in outlineTabs" :key="tab.label" type="button" class="tab tab--tight" :class="[{ 'tab--active': tab.active }, tab.room && `tab--${tab.room}`]">
                        <Icon :name="tab.icon" />{{ tab.label }}<Icon v-if="tab.active" name="close" size="12" class="tab__close" />
                    </button>
                    <div class="tabs__tools tabs__tools--inset">
                        <button type="button" class="win" aria-label="Minimize"><Icon name="minimize" /></button>
                        <button type="button" class="win win--max" aria-label="Maximize"><Icon name="maximize" /></button>
                    </div>
                </div>
                <div class="strip__tools">
                    <span class="strip__on"><Icon name="outline" size="12" /></span>
                    <svg class="icon" width="18" height="14"><path d="M1 9L11 2h6v12H1z" fill="#d9d6a8" /><path d="M11 2h5v5h-5z" fill="#fff4a0" stroke="#333" /></svg>
                </div>
            </section>

            <section class="view strip">
                <div class="tabs">
                    <button v-for="tab in propertyTabs" :key="tab.label" type="button" class="tab tab--tight" :class="{ 'tab--active': tab.active }">
                        <Icon :name="tab.icon" />{{ tab.label }}<Icon v-if="tab.active" name="close" size="12" class="tab__close" />
                    </button>
                    <div class="tabs__tools">
                        <template v-for="tool in viewTools" :key="tool">
                            <span v-if="tool === '|'" class="sep"></span>
                            <button v-else type="button" class="tool" :aria-label="tool"><Icon :name="tool" /></button>
                        </template>
                        <button type="button" class="win win--menu" aria-label="View menu"><Icon name="viewMenu" /></button>
                        <button type="button" class="win" aria-label="Minimize"><Icon name="minimize" /></button>
                        <button type="button" class="win win--max" aria-label="Maximize"><Icon name="maximize" /></button>
                    </div>
                </div>
            </section>
        </main>

        <div class="lower">
            <section class="view cloud">
                <div class="tabs tabs--small">
                    <button v-for="tab in cloudTabs" :key="tab.label" type="button" class="tab" :class="{ 'tab--active': tab.active }">
                        <Icon v-if="tab.icon" :name="tab.icon" />{{ tab.label }}<Icon v-if="tab.active" name="close" size="12" class="tab__close" />
                    </button>
                    <div class="tabs__tools tabs__tools--inset">
                        <button type="button" class="win" aria-label="Minimize"><Icon name="minimize" /></button>
                        <button type="button" class="win win--max" aria-label="Maximize"><Icon name="maximize" /></button>
                    </div>
                </div>
                <div class="cloud__tools">
                    <button type="button" class="tool" aria-label="Refresh"><Icon name="sync" /></button>
                    <button type="button" class="tool" aria-label="Expand all"><Icon name="expand" /></button>
                    <button type="button" class="tool" aria-label="Collapse all"><Icon name="collapse" /></button>
                    <button type="button" class="tool" aria-label="Applications"><Icon name="blueCube" /></button>
                    <button type="button" class="tool" aria-label="Settings"><Icon name="gears" /></button>
                    <button type="button" class="caret caret--small" aria-label="More"></button>
                    <button type="button" class="win win--menu" aria-label="View menu"><Icon name="viewMenu" /></button>
                </div>
                <h2 class="cloud__title">Cloud Servers</h2>
                <ul class="tree tree--small">
                    <li v-for="item in cloudTree" :key="item.label" :class="`tree__row tree__row--${item.level}`">
                        <span class="tree__arrow"><Icon :name="item.arrow" size="14" /></span>
                        <Icon :name="item.icon" />
                        {{ item.label }}
                    </li>
                </ul>
            </section>

            <section class="view props">
                <div class="tabs tabs--small">
                    <button v-for="tab in propertyTabs" :key="tab.label" type="button" class="tab" :class="{ 'tab--active': tab.active }">
                        <Icon :name="tab.icon" size="15" />{{ tab.label }}<Icon v-if="tab.active" name="close" size="12" class="tab__close" />
                    </button>
                    <div class="tabs__tools">
                        <template v-for="tool in viewTools" :key="tool">
                            <span v-if="tool === '|'" class="sep"></span>
                            <button v-else type="button" class="tool" :aria-label="tool"><Icon :name="tool" /></button>
                        </template>
                        <button type="button" class="win win--menu" aria-label="View menu"><Icon name="viewMenu" /></button>
                        <button type="button" class="win" aria-label="Minimize"><Icon name="minimize" /></button>
                        <button type="button" class="win win--max" aria-label="Maximize"><Icon name="maximize" /></button>
                    </div>
                </div>
                <h1 class="props__title"><Icon name="timer" size="17" />Timer (Timer)</h1>
                <div class="props__body">
                    <div class="sections">
                        <div class="sections__top"></div>
                        <button v-for="item in sections" :key="item" type="button" class="section" :class="{ 'section--active': item === section }" @click="section = item">{{ item }}</button>
                        <div class="sections__rest"></div>
                    </div>
                    <form class="form" @submit.prevent>
                        <label for="name">Name:</label>
                        <input id="name" v-model="name" type="text" class="form__name">
                        <label for="date">Start Time:</label>
                        <div class="form__row">
                            <div class="date">
                                <input id="date" type="text" value="10   October    2018">
                                <Icon name="calendar" />
                                <span class="date__caret"></span>
                            </div>
                            <div class="spin">
                                <input v-model="time" type="text" aria-label="Start hour">
                                <div class="spin__buttons">
                                    <button type="button" aria-label="Later"><svg class="icon" width="8" height="5"><path d="M0 5l4-5 4 5z" /></svg></button>
                                    <button type="button" aria-label="Earlier"><svg class="icon" width="8" height="5"><path d="M0 0h8l-4 5z" /></svg></button>
                                </div>
                            </div>
                            <button type="button" class="tool push" aria-label="Process property"><Icon name="tableOff" /></button>
                            <button type="button" class="tool" aria-label="Clear"><Icon name="clear" size="18" /></button>
                        </div>
                        <label for="once">Run Once:</label>
                        <input id="once" v-model="runOnce" type="checkbox" class="check">
                    </form>
                </div>
            </section>
        </div>
    </div>
</template>

<style>
body {
    background: #f0f0f0;
}
</style>

<style scoped>
.ide {
    display: flex;
    flex-direction: column;
    min-height: 100vh;
    overflow: hidden;
    background: #f0f0f0;
    color: #000;
    font-family: "Open Sans", "Noto Sans", sans-serif;
    font-size: 17px;
    line-height: 24px;
}
.ide * {
    box-sizing: border-box;
}
button,
input,
select {
    margin: 0;
    padding: 0;
    border: 0;
    background: none;
    color: inherit;
    font: inherit;
}
.icon {
    display: block;
    flex: none;
}
.push {
    margin-left: auto;
}

/* menu and toolbars */
.menubar {
    display: flex;
    gap: 14px;
    height: 21px;
    padding-left: 7px;
    background: #fff;
}
.menubar button {
    height: 18px;
    line-height: 18px;
}
.toolbars {
    display: grid;
    grid-template-columns: 1fr auto;
    grid-template-rows: 26px 39px;
    height: 66px;
}
.toolbar {
    display: flex;
    align-items: center;
}
.toolbar--debug {
    margin-left: 70px;
}
.toolbar--format {
    align-items: flex-start;
    grid-row: 2;
    padding-top: 7px;
    border-bottom: 2px solid #000;
}
.tool {
    display: flex;
    align-items: center;
    justify-content: center;
    flex: none;
    width: 23px;
    height: 22px;
}
.caret {
    flex: none;
    width: 25px;
    height: 22px;
}
.caret::before {
    content: "";
    display: block;
    width: 0;
    margin: 0 auto;
    border: 6px solid transparent;
    border-top-color: #000;
    border-bottom: 0;
}
.caret--off::before {
    border-top-color: #666;
}
.caret--small {
    width: 17px;
}
.caret--small::before {
    border-width: 5px 4px 0;
}
.sep {
    flex: none;
    width: 1px;
    height: 18px;
    margin: 2px 4px 2px 3px;
    background: #8a8a8a;
}
.combo {
    display: flex;
    align-items: center;
    height: 22px;
    border-right: 1px solid #aaa;
    border-left: 1px solid #aaa;
    background: #e1e1e1;
}
.combo select {
    flex: 1;
    height: 24px;
    padding-left: 3px;
    appearance: none;
    line-height: 24px;
}
.combo .icon {
    margin: 0 5px 0 -21px;
    opacity: 0.7;
    pointer-events: none;
}
.combo--font {
    width: 303px;
}
.combo--size {
    width: 58px;
}
.combo--zoom {
    width: 160px;
    margin-left: 1px;
    border-color: #666;
    background: #fff;
}
.combo--zoom select {
    padding-left: 7px;
}
.perspectives {
    display: flex;
    align-items: flex-end;
    grid-row: 1 / 3;
    grid-column: 2;
    padding-left: 5px;
}
.quick {
    width: 119px;
    height: 31px;
    margin-bottom: 5px;
    padding-left: 3px;
    border: 1px solid #666;
    background: #fff;
}
.quick::placeholder {
    color: #666;
    opacity: 1;
}
.perspectives__bar {
    display: flex;
    align-items: center;
    height: 41px;
    margin-left: 6px;
    padding: 0 4px 0 6px;
    border-left: 1px solid #000;
}
.sep--tall {
    height: 27px;
    margin: 0 6px 0 1px;
}
.design {
    display: flex;
    align-items: center;
    gap: 6px;
    height: 30px;
    padding: 0 4px;
    border: 1px solid #90c8f6;
    background: #c0dcf3;
}

/* views and their tabs */
.workspace {
    display: grid;
    grid-template-columns: 580px minmax(0, 1fr);
    grid-template-rows: auto 42px;
    gap: 4px;
}
.view {
    display: flex;
    flex-direction: column;
    border: 1px solid #a0a0a0;
    border-radius: 4px 4px 0 0;
    background: #fff;
}
.tabs {
    display: flex;
    flex: none;
    height: 29px;
    border-radius: 4px 4px 0 0;
    background: #f0f0f0;
}
.tab {
    display: flex;
    align-items: center;
    gap: 4px;
    padding: 2px 5px 0 4px;
    border-right: 1px solid #a0a0a0;
    border-bottom: 1px solid #a0a0a0;
    white-space: nowrap;
}
.tab--active {
    border-bottom-color: #fff;
    border-radius: 4px 4px 0 0;
    background: #fff;
}
.tab--editor:not(.tab--active) {
    padding-right: 20px;
}
.tab--tight {
    padding: 2px 3px 0 4px;
}
.tab--active.tab--tight {
    padding-right: 5px;
}
.tab--medium {
    padding-right: 8px;
}
.tab--wide {
    padding-right: 16px;
}
.tab__close {
    margin: 0 0 3px 2px;
}
.tabs__tools {
    display: flex;
    flex: 1;
    justify-content: flex-end;
    padding: 1px 1px 0 0;
    border-bottom: 1px solid #a0a0a0;
}
.tabs__tools--inset {
    padding-right: 6px;
}
.win {
    display: flex;
    justify-content: center;
    flex: none;
    width: 20px;
    height: 20px;
}
.win--menu {
    margin-left: 8px;
}
.win--max {
    width: 16px;
    margin-left: 5px;
}
.tabs--small {
    height: 24px;
}
.tabs--small .tab {
    gap: 3px;
    padding: 0 5px 0 4px;
}
.tabs--small .tabs__tools--inset {
    padding-right: 7px;
}

/* trees */
.tree {
    margin: 0;
    padding: 2px 0 91px;
    list-style: none;
}
.tree__row {
    display: flex;
    align-items: center;
    gap: 4px;
    height: 28px;
    padding-left: 5px;
    white-space: nowrap;
}
.tree__row--1 {
    padding-left: 24px;
}
.tree__row--2 {
    padding-left: 43px;
}
.tree__arrow {
    flex: none;
    width: 16px;
}
.tree--small {
    padding: 0;
}
.tree--small .tree__row {
    height: 23px;
    padding-left: 6px;
}
.tree--small .tree__row--1 {
    padding-left: 25px;
}
.tree--small .tree__row--2 {
    padding-left: 44px;
}

/* process editor */
.editor__body {
    display: flex;
    flex: 1;
}
.scroller {
    display: grid;
    flex: 1;
    grid-template-columns: minmax(0, 1fr) 25px;
    grid-template-rows: 1fr 26px;
    padding: 1px 2px 1px 1px;
}
.canvas {
    position: relative;
    overflow: hidden;
}
.port {
    position: absolute;
    top: 33px;
    display: flex;
    align-items: center;
    gap: 9px;
    width: 116px;
    height: 23px;
    padding: 0 8px;
    border: 1px solid #dde2dc;
    border-radius: 6px;
    background: #fbfdf9;
}
.port--in {
    left: 11px;
}
.port--out {
    left: 745px;
    justify-content: flex-end;
}
.process {
    position: absolute;
    top: 10px;
    left: 131px;
    display: flex;
    flex-direction: column;
    width: 610px;
    height: 413px;
    padding: 0 1px 1px;
    border: 1px solid #777;
    border-radius: 6px;
    background: #ffe17c;
}
.process__title {
    display: flex;
    justify-content: space-between;
    height: 21px;
    padding: 3px 4px 0 2px;
    overflow: hidden;
    border-radius: 5px 5px 0 0;
    background: linear-gradient(#ffe782, #ffdf7a 50%, #fff7b0);
}
.process__title span {
    margin-top: 2px;
}
.process__body {
    flex: 1;
    border: 1px solid #777;
    border-radius: 0 0 4px 4px;
    background: #fff;
}
.links {
    position: absolute;
    top: 0;
    left: -1px;
}
.node {
    position: absolute;
    display: flex;
    align-items: center;
    flex-direction: column;
    transform: translateX(-50%);
    color: #000080;
}
.node__selection {
    position: relative;
    width: 51px;
    height: 51px;
    padding: 4px;
    border: 1px solid #000;
}
.handle {
    position: absolute;
    width: 5px;
    height: 5px;
    outline: 1px solid #fff;
    background: #000;
}
.handle--1, .handle--2, .handle--3 { top: -3px; }
.handle--4, .handle--5 { top: 22px; }
.handle--6, .handle--7, .handle--8 { bottom: -3px; }
.handle--1, .handle--4, .handle--6 { left: -3px; }
.handle--2, .handle--7 { left: 22px; }
.handle--3, .handle--5, .handle--8 { right: -3px; }
.vbar {
    display: flex;
    flex-direction: column;
    background: #f0f0f0;
}
.vbar__thumb {
    flex: 1;
    background: #cdcdcd;
}
.hbar {
    display: flex;
    grid-column: 1 / 3;
    justify-content: space-between;
    padding-right: 5px;
    background: #f0f0f0;
}

/* palette */
.palette {
    display: flex;
    flex-direction: column;
    width: 290px;
    margin-top: 2px;
    border-left: 1px solid #a0a0a0;
}
.palette__title {
    display: flex;
    align-items: center;
    gap: 3px;
    height: 33px;
    padding: 0 9px 0 4px;
    border-bottom: 1px solid #a0a0a0;
    background: linear-gradient(#fff, #f0f0f0);
}
.palette__tools {
    display: flex;
    align-items: center;
    gap: 8px;
    height: 32px;
    padding-left: 6px;
    border-bottom: 1px solid #a0a0a0;
    background: #f0f0f0;
}
.mini {
    border: 3px solid transparent;
    border-top-color: #000;
    border-bottom: 0;
    margin: 0 -5px 0 -3px;
}
.up {
    margin-bottom: 6px;
}
.palette__tools .up + .icon {
    margin-left: -4px;
}
.drawer {
    display: flex;
    align-items: center;
    gap: 5px;
    flex: none;
    height: 31px;
    padding-left: 3px;
    border-bottom: 1px solid #8a8a8a;
    background: linear-gradient(#f0f0f0, #c0c0c0);
    text-align: left;
}
.drawer--open {
    border-bottom: 0;
    background: #fff;
}
.library {
    display: flex;
    height: 202px;
    overflow: hidden;
    border-bottom: 1px solid #555;
}
.library__grid {
    display: grid;
    flex: 1;
    grid-template-columns: 134px 1fr;
    gap: 4px 11px;
    align-content: start;
    padding: 3px 0 0 3px;
}
.entry {
    display: flex;
    align-items: center;
    flex-direction: column;
    height: 60px;
    border-radius: 2px;
    white-space: nowrap;
}
.library .entry {
    padding-top: 2px;
}
.entry--selected {
    background: #cfe3fb;
}
.oldbar {
    display: flex;
    flex-direction: column;
    width: 14px;
    background: #f6f6f6;
}
.oldbar__up,
.oldbar__down {
    height: 15px;
    border-bottom: 1px solid #555;
    background: #f0f0f0;
}
.oldbar__up::before,
.oldbar__down::before {
    content: "";
    display: block;
    width: 0;
    margin: 5px auto 0;
    border: 4px solid transparent;
    border-top: 0;
    border-bottom-color: #000;
}
.oldbar__down::before {
    border-top: 4px solid #000;
    border-bottom: 0;
}
.oldbar__thumb {
    height: 66px;
    margin-bottom: auto;
    border-bottom: 1px solid #555;
    background: #f0f0f0;
}
.group {
    display: flex;
    align-items: center;
    gap: 4px;
    height: 30px;
    padding: 0 4px 0 2px;
    background: #ebebeb;
}
.group .icon:last-child {
    margin-left: 2px;
}
.group__items {
    display: flex;
    padding-top: 5px;
}
.group__items .entry {
    width: 95px;
    height: 84px;
    line-height: 25px;
}

/* clipped views above the second window */
.strip {
    border-bottom: 0;
    overflow: hidden;
}
.strip__tools {
    display: flex;
    justify-content: flex-end;
    gap: 4px;
    height: 10px;
    margin: 3px 3px 0;
    padding-right: 1px;
    overflow: hidden;
    background: #f0f0f0;
}
.strip__on {
    display: flex;
    justify-content: center;
    width: 22px;
    padding-top: 5px;
    background: #c0dcf3;
}

/* second window */
.lower {
    display: grid;
    flex: 1;
    grid-template-columns: 321px minmax(0, 1fr);
    gap: 5px;
    padding: 4px 2px 0 1px;
    border-top: 2px solid #bbb;
    font-size: 14px;
    line-height: 20px;
}
.cloud,
.props {
    border-bottom: 0;
}
.cloud__tools {
    display: flex;
    justify-content: flex-end;
    flex: none;
    margin: 2px 2px 0;
    background: #f0f0f0;
}
.cloud__tools .caret {
    align-self: center;
}
.cloud__title {
    margin: 0;
    padding: 5px 9px 2px;
    font-size: 14px;
    font-weight: 400;
}
.props {
    border-right: 0;
}
.props__title {
    display: flex;
    align-items: center;
    gap: 4px;
    height: 38px;
    margin: 0;
    padding: 2px 5px 0;
    border-bottom: 2px solid #c3d5e8;
    background: linear-gradient(#fff, #e1e8f1);
    color: #0678d7;
    font-size: 17px;
}
.props__body {
    display: flex;
    flex: 1;
}
.sections {
    display: flex;
    flex-direction: column;
    width: 99px;
    padding-left: 1px;
}
.sections__top {
    height: 10px;
    border-right: 1px solid #a0a0a0;
    border-bottom: 1px solid #a0a0a0;
    background: #f0f0f0;
}
.section {
    height: 27px;
    padding-left: 7px;
    border-right: 1px solid #a0a0a0;
    border-bottom: 2px solid #a3a39b;
    background: linear-gradient(#dcdccb, #cacab9);
    text-align: left;
}
.section--active {
    border-right-color: #fff;
    border-bottom: 1px solid #a0a0a0;
    background: #fff;
    font-weight: 700;
}
.sections__rest {
    flex: 1;
    border-right: 1px solid #a0a0a0;
    background: #f0f0f0;
}
.form {
    display: grid;
    flex: 1;
    grid-template-columns: 210px minmax(0, 1fr);
    grid-template-rows: 26px 28px 20px;
    gap: 5px 0;
    align-content: start;
    align-items: center;
    padding: 10px 8px 0 10px;
}
.form label {
    font-weight: 700;
}
.form__name {
    height: 26px;
    padding: 0 6px;
    border: 1px solid #7a7a7a;
    background: #fff;
}
.form__row {
    display: flex;
    align-items: center;
}
.date {
    display: flex;
    align-items: center;
    width: 175px;
    height: 28px;
    padding-left: 2px;
    border: 1px solid #7a7a7a;
}
.date input {
    width: 138px;
    white-space: pre;
}
.date__caret {
    margin-left: 2px;
    border: 5px solid transparent;
    border-top-color: #3d5a8c;
    border-bottom: 0;
}
.spin {
    display: flex;
    align-items: center;
    width: 80px;
    height: 28px;
    margin-left: 5px;
    padding: 0 2px 0 1px;
    border: 1px solid #7a7a7a;
}
.spin input {
    flex: 1;
    width: 56px;
}
.spin__buttons {
    display: flex;
    flex-direction: column;
    width: 18px;
}
.spin__buttons button {
    display: flex;
    align-items: center;
    justify-content: center;
    height: 11px;
    border: 1px solid #aaa;
    background: #f0f0f0;
}
.check {
    width: 16px;
    height: 16px;
    appearance: none;
    border: 1px solid #333;
    background: #fff;
}
.check:checked::before {
    content: "";
    display: block;
    width: 9px;
    height: 5px;
    margin: 3px 0 0 2px;
    border: solid #333;
    border-width: 0 0 1px 1px;
    transform: rotate(-45deg);
}
</style>
